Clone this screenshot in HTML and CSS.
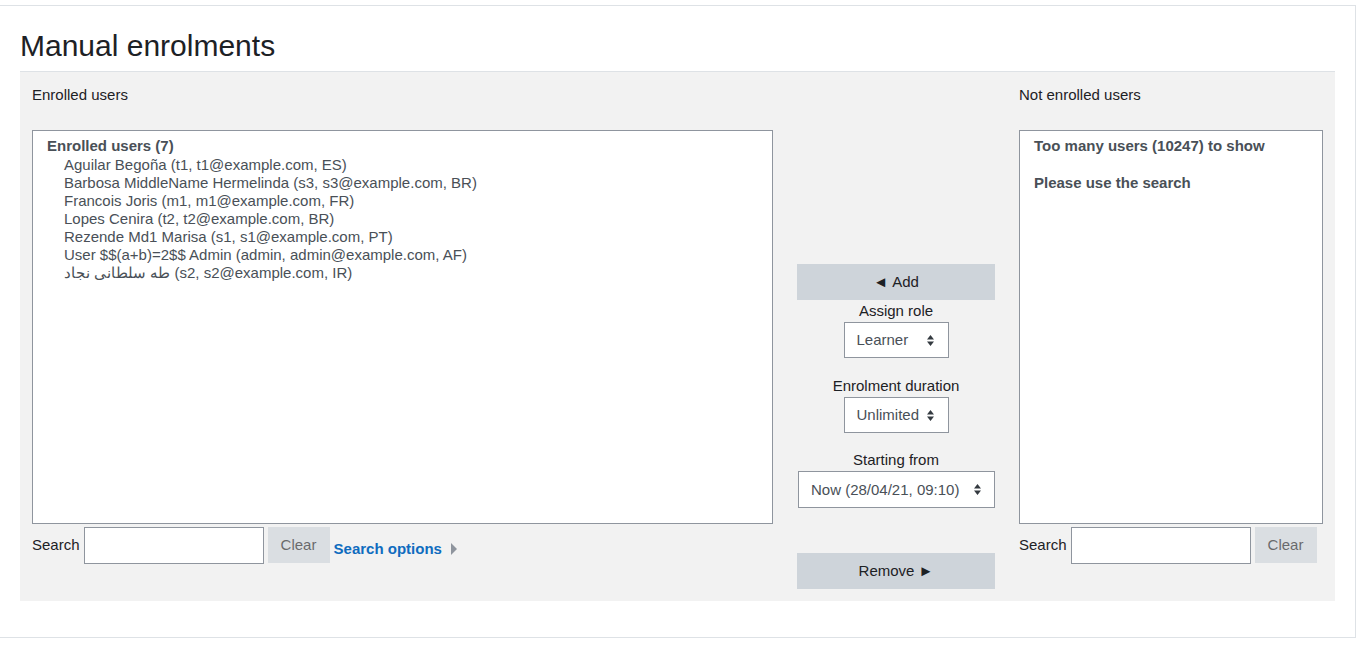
FILE: index.html
```html
<!DOCTYPE html>
<html lang="en">
<head>
<meta charset="utf-8">
<title>Manual enrolments</title>
<link rel="stylesheet" href="styles.css">
</head>
<body>
<div class="card">
  <h2 class="title">Manual enrolments</h2>
  <div class="panel">
    <div class="col col-left">
      <div class="col-label">Enrolled users</div>
      <div class="listbox listbox-left">
        <div class="group-label">Enrolled users (7)</div>
        <div class="option first">Aguilar Begoña (t1, t1@example.com, ES)</div>
        <div class="option">Barbosa MiddleName Hermelinda (s3, s3@example.com, BR)</div>
        <div class="option">Francois Joris (m1, m1@example.com, FR)</div>
        <div class="option">Lopes Cenira (t2, t2@example.com, BR)</div>
        <div class="option">Rezende Md1 Marisa (s1, s1@example.com, PT)</div>
        <div class="option">User $$(a+b)=2$$ Admin (admin, admin@example.com, AF)</div>
        <div class="option">طه سلطانی نجاد (s2, s2@example.com, IR)</div>
      </div>
      <div class="search-row">
        <span class="search-label">Search</span>
        <span class="search-input"></span>
        <span class="btn btn-clear">Clear</span>
        <span class="search-options">Search options <svg class="tri" width="6" height="12" viewBox="0 0 6 12"><path d="M0 0L6 6 0 12Z" fill="#8f959e"/></svg></span>
      </div>
    </div>

    <div class="col col-mid">
      <div class="btn btn-action">◄&nbsp;Add</div>
      <div class="mid-label">Assign role</div>
      <div class="select sel-small">Learner <svg width="7" height="11" viewBox="0 0 7 11"><path d="M0 4.5L3.5 0 7 4.5Z M0 6.5L3.5 11 7 6.5Z" fill="#343a40"/></svg></div>
      <div class="mid-label gap17">Enrolment duration</div>
      <div class="select sel-small">Unlimited <svg width="7" height="11" viewBox="0 0 7 11"><path d="M0 4.5L3.5 0 7 4.5Z M0 6.5L3.5 11 7 6.5Z" fill="#343a40"/></svg></div>
      <div class="mid-label gap16">Starting from</div>
      <div class="select sel-wide">Now (28/04/21, 09:10) <svg width="7" height="11" viewBox="0 0 7 11"><path d="M0 4.5L3.5 0 7 4.5Z M0 6.5L3.5 11 7 6.5Z" fill="#343a40"/></svg></div>
      <div class="btn btn-action btn-remove">Remove&nbsp;►</div>
    </div>

    <div class="col col-right">
      <div class="col-label">Not enrolled users</div>
      <div class="listbox listbox-right">
        <div class="group-label">Too many users (10247) to show</div>
        <div class="group-label second">Please use the search</div>
      </div>
      <div class="search-row">
        <span class="search-label">Search</span>
        <span class="search-input"></span>
        <span class="btn btn-clear">Clear</span>
      </div>
    </div>
  </div>
</div>
</body>
</html>
```

FILE: styles.css
```css
html, body {
  margin: 0;
  padding: 0;
  background: #fff;
}
body {
  font-family: "Liberation Sans", Arial, sans-serif;
  font-size: 15px;
  color: #1d2125;
  overflow: hidden;
}
.card {
  box-sizing: border-box;
  margin-top: 5px;
  margin-left: -1px;
  width: 1357px;
  border: 1px solid #dee2e6;
  border-left: none;
  padding: 22px 20px 36px 21px;
}
.title {
  margin: 0;
  font-size: 30px;
  line-height: 36px;
  font-weight: 400;
  color: #1d2125;
}
.panel {
  margin-top: 7px;
  background: #f2f2f2;
  border-top: 1px solid #dee2e6;
  padding: 12px;
  display: flex;
  gap: 24px;
  align-items: flex-start;
}
.col {
  display: flex;
  flex-direction: column;
}
.col-left { width: 741px; }
.col-mid { width: 198px; padding-top: 180px; align-items: center; }
.col-right { width: 304px; }
.col-label {
  line-height: 22.5px;
  height: 46px;
}
.listbox {
  box-sizing: border-box;
  height: 394px;
  background: #fff;
  border: 1px solid #8f959e;
  padding: 6px 14px;
  color: #495057;
  line-height: 18px;
}
.group-label {
  font-weight: 700;
}
.group-label.second {
  margin-top: 19px;
}
.option {
  padding-left: 17px;
  white-space: nowrap;
}
.option.first {
  margin-top: 1px;
}
.search-row {
  margin-top: 3px;
  display: flex;
  align-items: center;
  height: 37px;
}
.search-label {
  margin-right: 4px;
  padding-bottom: 2px;
}
.search-input {
  box-sizing: border-box;
  width: 180px;
  height: 37px;
  background: #fff;
  border: 1px solid #8f959e;
}
.btn {
  box-sizing: border-box;
  display: flex;
  align-items: center;
  justify-content: center;
  background: #ced4da;
  color: #1d2125;
  padding-bottom: 1px;
}
.btn-clear {
  margin-left: 4px;
  width: 62px;
  height: 36px;
  align-self: flex-start;
  opacity: 0.65;
}
.search-options {
  margin-left: 4px;
  margin-top: 6px;
  font-weight: 700;
  color: #0f6cbf;
  display: flex;
  align-items: center;
}
.search-options .tri {
  margin-left: 9px;
  margin-top: 1px;
}
.btn-action {
  width: 198px;
  height: 36px;
}
.btn-remove {
  margin-top: 45px;
}
.mid-label {
  line-height: 22px;
  text-align: center;
}
.gap17 { margin-top: 17px; }
.gap16 { margin-top: 16px; }
.select {
  box-sizing: border-box;
  display: flex;
  align-items: center;
  justify-content: space-between;
  background: #fff;
  border: 1px solid #8f959e;
  color: #495057;
  padding: 0 14px 1px 12px;
}
.select svg {
  margin-top: 1px;
}
.sel-small {
  width: 105px;
  height: 36px;
}
.sel-wide {
  width: 197px;
  height: 37px;
  padding-right: 13px;
  align-self: flex-end;
}
```
